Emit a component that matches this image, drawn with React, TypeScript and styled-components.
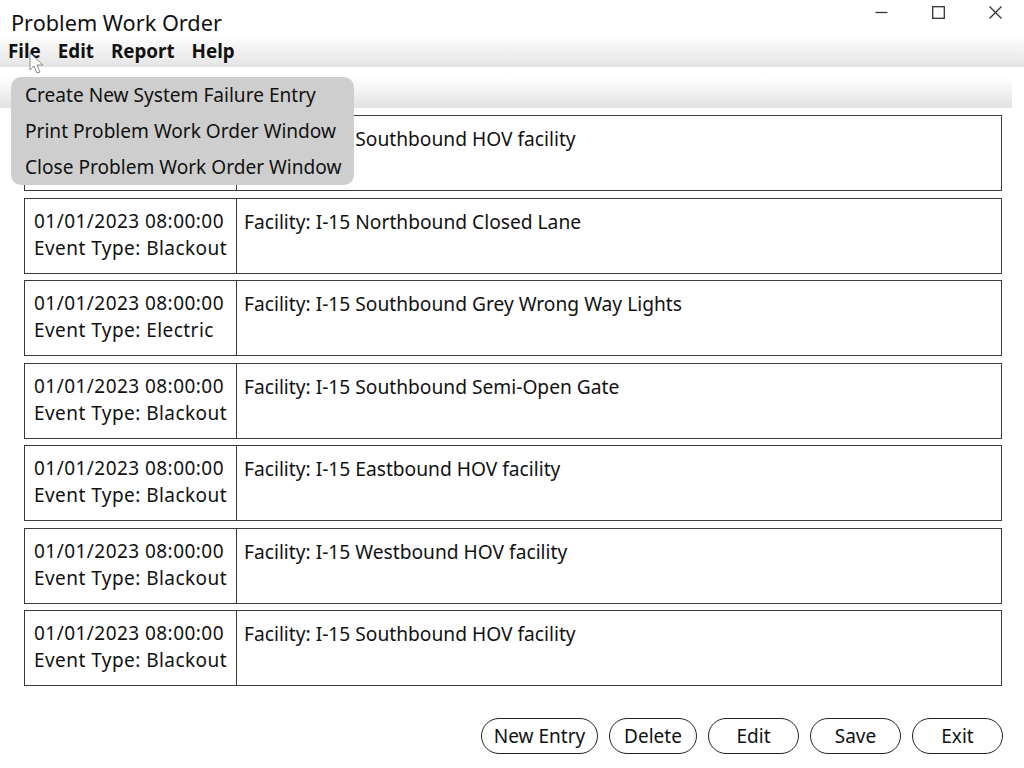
import React from "react";
import styled, { createGlobalStyle } from "styled-components";

const Global = createGlobalStyle`
  html, body { margin: 0; padding: 0; background: #fff; }
  body { font-family: "Noto Sans", "Open Sans", sans-serif; color: #111; }
  * { box-sizing: border-box; }
`;

const Window = styled.div`
  position: relative;
  width: 1024px;
  height: 768px;
  overflow: hidden;
  display: flex;
  flex-direction: column;
`;

const TitleBar = styled.div`
  height: 35px;
  display: flex;
  align-items: center;
  justify-content: space-between;
  padding: 0 22px 0 11px;
`;

const Title = styled.div`
  font-size: 21.7px;
  line-height: 1;
  padding-top: 10px;
  color: #111;
`;

const Controls = styled.div`
  display: flex;
  gap: 44px;
  align-items: center;
  margin-top: -11px;
`;

const MenuBar = styled.div`
  height: 32px;
  display: flex;
  align-items: center;
  gap: 17px;
  padding-left: 8px;
  background: linear-gradient(#ffffff, #e4e4e4);
`;

const MenuItem = styled.span`
  font-weight: 700;
  font-size: 18.8px;
  color: #111;
`;

const ToolStrip = styled.div`
  margin-top: 10px;
  width: 1012px;
  height: 31px;
  background: linear-gradient(#ffffff, #e2e2e2);
`;

const List = styled.div`
  display: flex;
  flex-direction: column;
  gap: 6.5px;
  padding: 7px 0 0 24px;
`;

const Row = styled.div`
  width: 978px;
  height: 76px;
  display: flex;
  border: 1px solid #3a3a3a;
`;

const LeftCell = styled.div`
  width: 212px;
  border-right: 1px solid #3a3a3a;
  padding: 9px 0 0 9px;
  font-size: 19px;
  letter-spacing: 0.45px;
  line-height: 27px;
  white-space: nowrap;
`;

const RightCell = styled.div`
  flex: 1;
  padding: 9px 0 0 7px;
  font-size: 19.2px;
  line-height: 27px;
  white-space: nowrap;
`;

const Buttons = styled.div`
  margin-top: auto;
  margin-bottom: 14px;
  display: flex;
  justify-content: flex-end;
  gap: 11px;
  padding-right: 21px;
`;

const Button = styled.button<{ $w: number }>`
  width: ${(p) => p.$w}px;
  height: 36px;
  border: 1px solid #222;
  border-radius: 18px;
  background: #fff;
  font-family: "Noto Sans", "Open Sans", sans-serif;
  font-size: 19px;
  color: #111;
  padding: 0;
`;

const Dropdown = styled.div`
  position: absolute;
  left: 11px;
  top: 77px;
  width: 343px;
  height: 108px;
  background: #cecece;
  border-radius: 10px;
  padding: 0 0 0 14px;
  display: flex;
  flex-direction: column;
`;

const DropItem = styled.div`
  font-size: 19.1px;
  line-height: 36px;
  color: #111;
  white-space: nowrap;
`;

const Cursor = styled.svg`
  position: absolute;
  left: 29px;
  top: 52px;
`;

const rows = [
  { t: "01/01/2023 08:00:00", e: "Blackout", f: "I-15 Southbound HOV facility" },
  { t: "01/01/2023 08:00:00", e: "Blackout", f: "I-15 Northbound Closed Lane" },
  { t: "01/01/2023 08:00:00", e: "Electric", f: "I-15 Southbound Grey Wrong Way Lights" },
  { t: "01/01/2023 08:00:00", e: "Blackout", f: "I-15 Southbound Semi-Open Gate" },
  { t: "01/01/2023 08:00:00", e: "Blackout", f: "I-15 Eastbound HOV facility" },
  { t: "01/01/2023 08:00:00", e: "Blackout", f: "I-15 Westbound HOV facility" },
  { t: "01/01/2023 08:00:00", e: "Blackout", f: "I-15 Southbound HOV facility" },
];

export default function App() {
  return (
    <>
      <Global />
      <Window>
        <TitleBar>
          <Title>Problem Work Order</Title>
          <Controls>
            <svg width="13" height="13" viewBox="0 0 13 13">
              <line x1="0.5" y1="6.5" x2="12.5" y2="6.5" stroke="#333" strokeWidth="1.3" />
            </svg>
            <svg width="13" height="13" viewBox="0 0 13 13">
              <rect x="0.7" y="0.7" width="11.6" height="11.6" fill="none" stroke="#333" strokeWidth="1.3" />
            </svg>
            <svg width="13" height="13" viewBox="0 0 13 13">
              <path d="M0.5 0.5 L12.5 12.5 M12.5 0.5 L0.5 12.5" stroke="#333" strokeWidth="1.3" />
            </svg>
          </Controls>
        </TitleBar>
        <MenuBar>
          <MenuItem>File</MenuItem>
          <MenuItem>Edit</MenuItem>
          <MenuItem>Report</MenuItem>
          <MenuItem>Help</MenuItem>
        </MenuBar>
        <ToolStrip />
        <List>
          {rows.map((r, i) => (
            <Row key={i}>
              <LeftCell>
                {r.t}
                <br />
                Event Type: {r.e}
              </LeftCell>
              <RightCell>Facility: {r.f}</RightCell>
            </Row>
          ))}
        </List>
        <Buttons>
          <Button $w={117}>New Entry</Button>
          <Button $w={88}>Delete</Button>
          <Button $w={91}>Edit</Button>
          <Button $w={91}>Save</Button>
          <Button $w={91}>Exit</Button>
        </Buttons>
        <Dropdown>
          <DropItem>Create New System Failure Entry</DropItem>
          <DropItem>Print Problem Work Order Window</DropItem>
          <DropItem>Close Problem Work Order Window</DropItem>
        </Dropdown>
        <Cursor width="16" height="24" viewBox="0 0 16 24">
          <path d="M1 1 L1 18 L5 14 L8 21 L11 20 L8 13 L14 13 Z" fill="#fff" stroke="#888" strokeWidth="1" strokeLinejoin="round" />
        </Cursor>
      </Window>
    </>
  );
}
